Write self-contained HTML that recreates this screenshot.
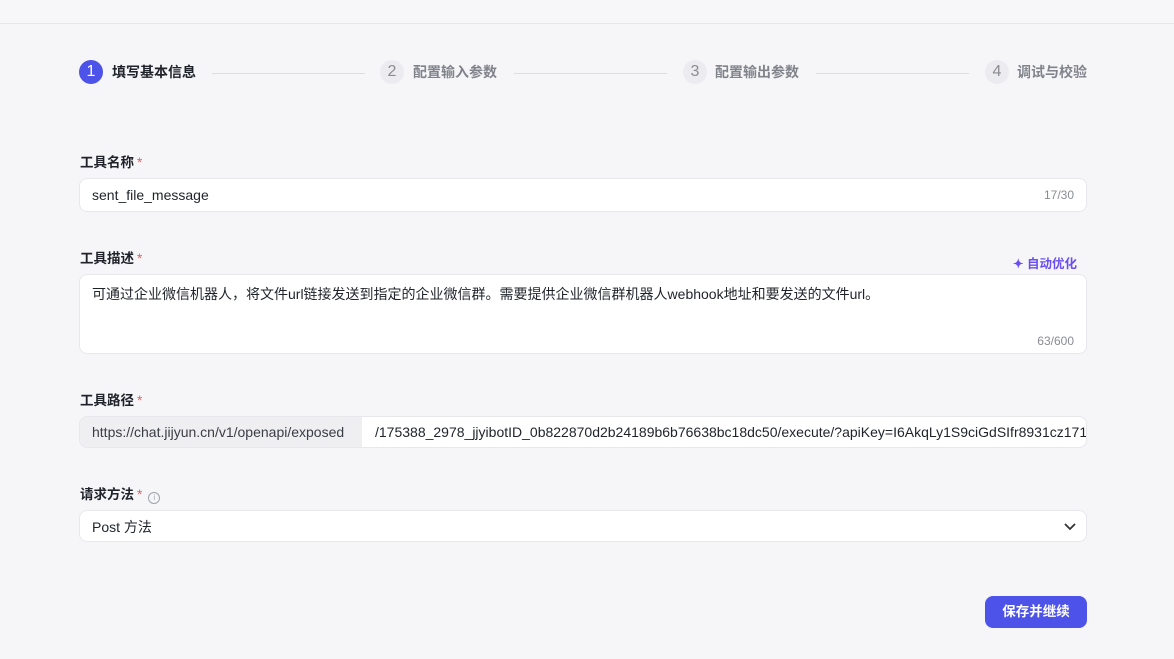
<!DOCTYPE html>
<html><head><meta charset="utf-8"><style>
*{box-sizing:border-box;margin:0;padding:0}
body{width:1174px;height:659px;background:#f6f6f9;font-family:"Liberation Sans","Noto Sans CJK SC",sans-serif;color:#1f2329;position:relative;overflow:hidden}
.top{position:absolute;left:0;top:0;width:1174px;height:24px;background:#f7f7f9;border-bottom:1px solid #e6e6ea}
.abs{position:absolute}
.circ{position:absolute;width:24px;height:24px;border-radius:50%;text-align:center;line-height:24px;font-size:16px}
.c1{background:#4d53e8;color:#fff}
.c2{background:#ececf0;color:#8a8c93}
.st{position:absolute;top:63px;font-size:14px;font-weight:bold;line-height:18px}
.line{position:absolute;top:73px;height:1px;background:#dcdce2}
.lab{position:absolute;left:80px;font-size:13.5px;font-weight:bold;line-height:16px;color:#1f2329}
.lab i{color:#f25a5a;font-style:normal;font-weight:normal;margin-left:3px}
.box{position:absolute;left:79px;width:1008px;background:#fff;border:1px solid #e8e8ec;border-radius:8px;font-size:14px;color:#1f2329}
.cnt{position:absolute;right:12px;font-size:12px;color:#8a8c93}
</style></head><body>
<div class="top"></div>
<div class="circ c1" style="left:79px;top:60px">1</div>
<div class="st" style="left:112px;color:#1f2329">填写基本信息</div>
<div class="line" style="left:212px;width:153px"></div>
<div class="circ c2" style="left:380px;top:60px">2</div>
<div class="st" style="left:413px;color:#80838a">配置输入参数</div>
<div class="line" style="left:514px;width:153px"></div>
<div class="circ c2" style="left:683px;top:60px">3</div>
<div class="st" style="left:715px;color:#80838a">配置输出参数</div>
<div class="line" style="left:816px;width:153px"></div>
<div class="circ c2" style="left:985px;top:60px">4</div>
<div class="st" style="left:1017px;color:#80838a">调试与校验</div>

<div class="lab" style="top:155px">工具名称<i>*</i></div>
<div class="box" style="top:178px;height:34px"><span class="abs" style="left:12px;top:8px">sent_file_message</span><span class="cnt" style="top:9px">17/30</span></div>

<div class="lab" style="top:251px">工具描述<i>*</i></div>
<div class="abs" style="left:1013px;top:253px;font-size:12.5px;font-weight:bold;color:#6b4ef0">✦ 自动优化</div>
<div class="box" style="top:274px;height:80px"><span class="abs" style="left:12px;top:9px">可通过企业微信机器人，将文件url链接发送到指定的企业微信群。需要提供企业微信群机器人webhook地址和要发送的文件url。</span><span class="cnt" style="top:59px">63/600</span></div>

<div class="lab" style="top:393px">工具路径<i>*</i></div>
<div class="box" style="top:416px;height:32px;overflow:hidden"><div class="abs" style="left:0;top:0;width:282px;height:30px;background:#efeff2;padding:7px 0 0 12px;color:#3a3d44;white-space:nowrap">https://chat.jijyun.cn/v1/openapi/exposed</div><span class="abs" style="left:295px;top:7px;white-space:nowrap">/175388_2978_jjyibotID_0b822870d2b24189b6b76638bc18dc50/execute/?apiKey=I6AkqLy1S9ciGdSIfr8931cz1710</span></div>

<div class="lab" style="top:487px">请求方法<i>*</i><span style="display:inline-block;width:12px;height:12px;border:1px solid #a0a3aa;border-radius:50%;margin-left:6px;vertical-align:-1px;font-size:8px;color:#a0a3aa;text-align:center;line-height:10px;font-weight:normal">i</span></div>
<div class="box" style="top:510px;height:32px"><span class="abs" style="left:12px;top:6px">Post 方法</span>
<svg class="abs" style="left:983px;top:8px" width="14" height="14" viewBox="0 0 14 14"><path d="M2 5l5 5 5-5" fill="none" stroke="#333" stroke-width="1.8"/></svg></div>

<div class="abs" style="left:985px;top:596px;width:102px;height:32px;background:#4d53e8;border-radius:8px;color:#fff;font-size:13.5px;font-weight:bold;text-align:center;line-height:32px">保存并继续</div>
</body></html>
